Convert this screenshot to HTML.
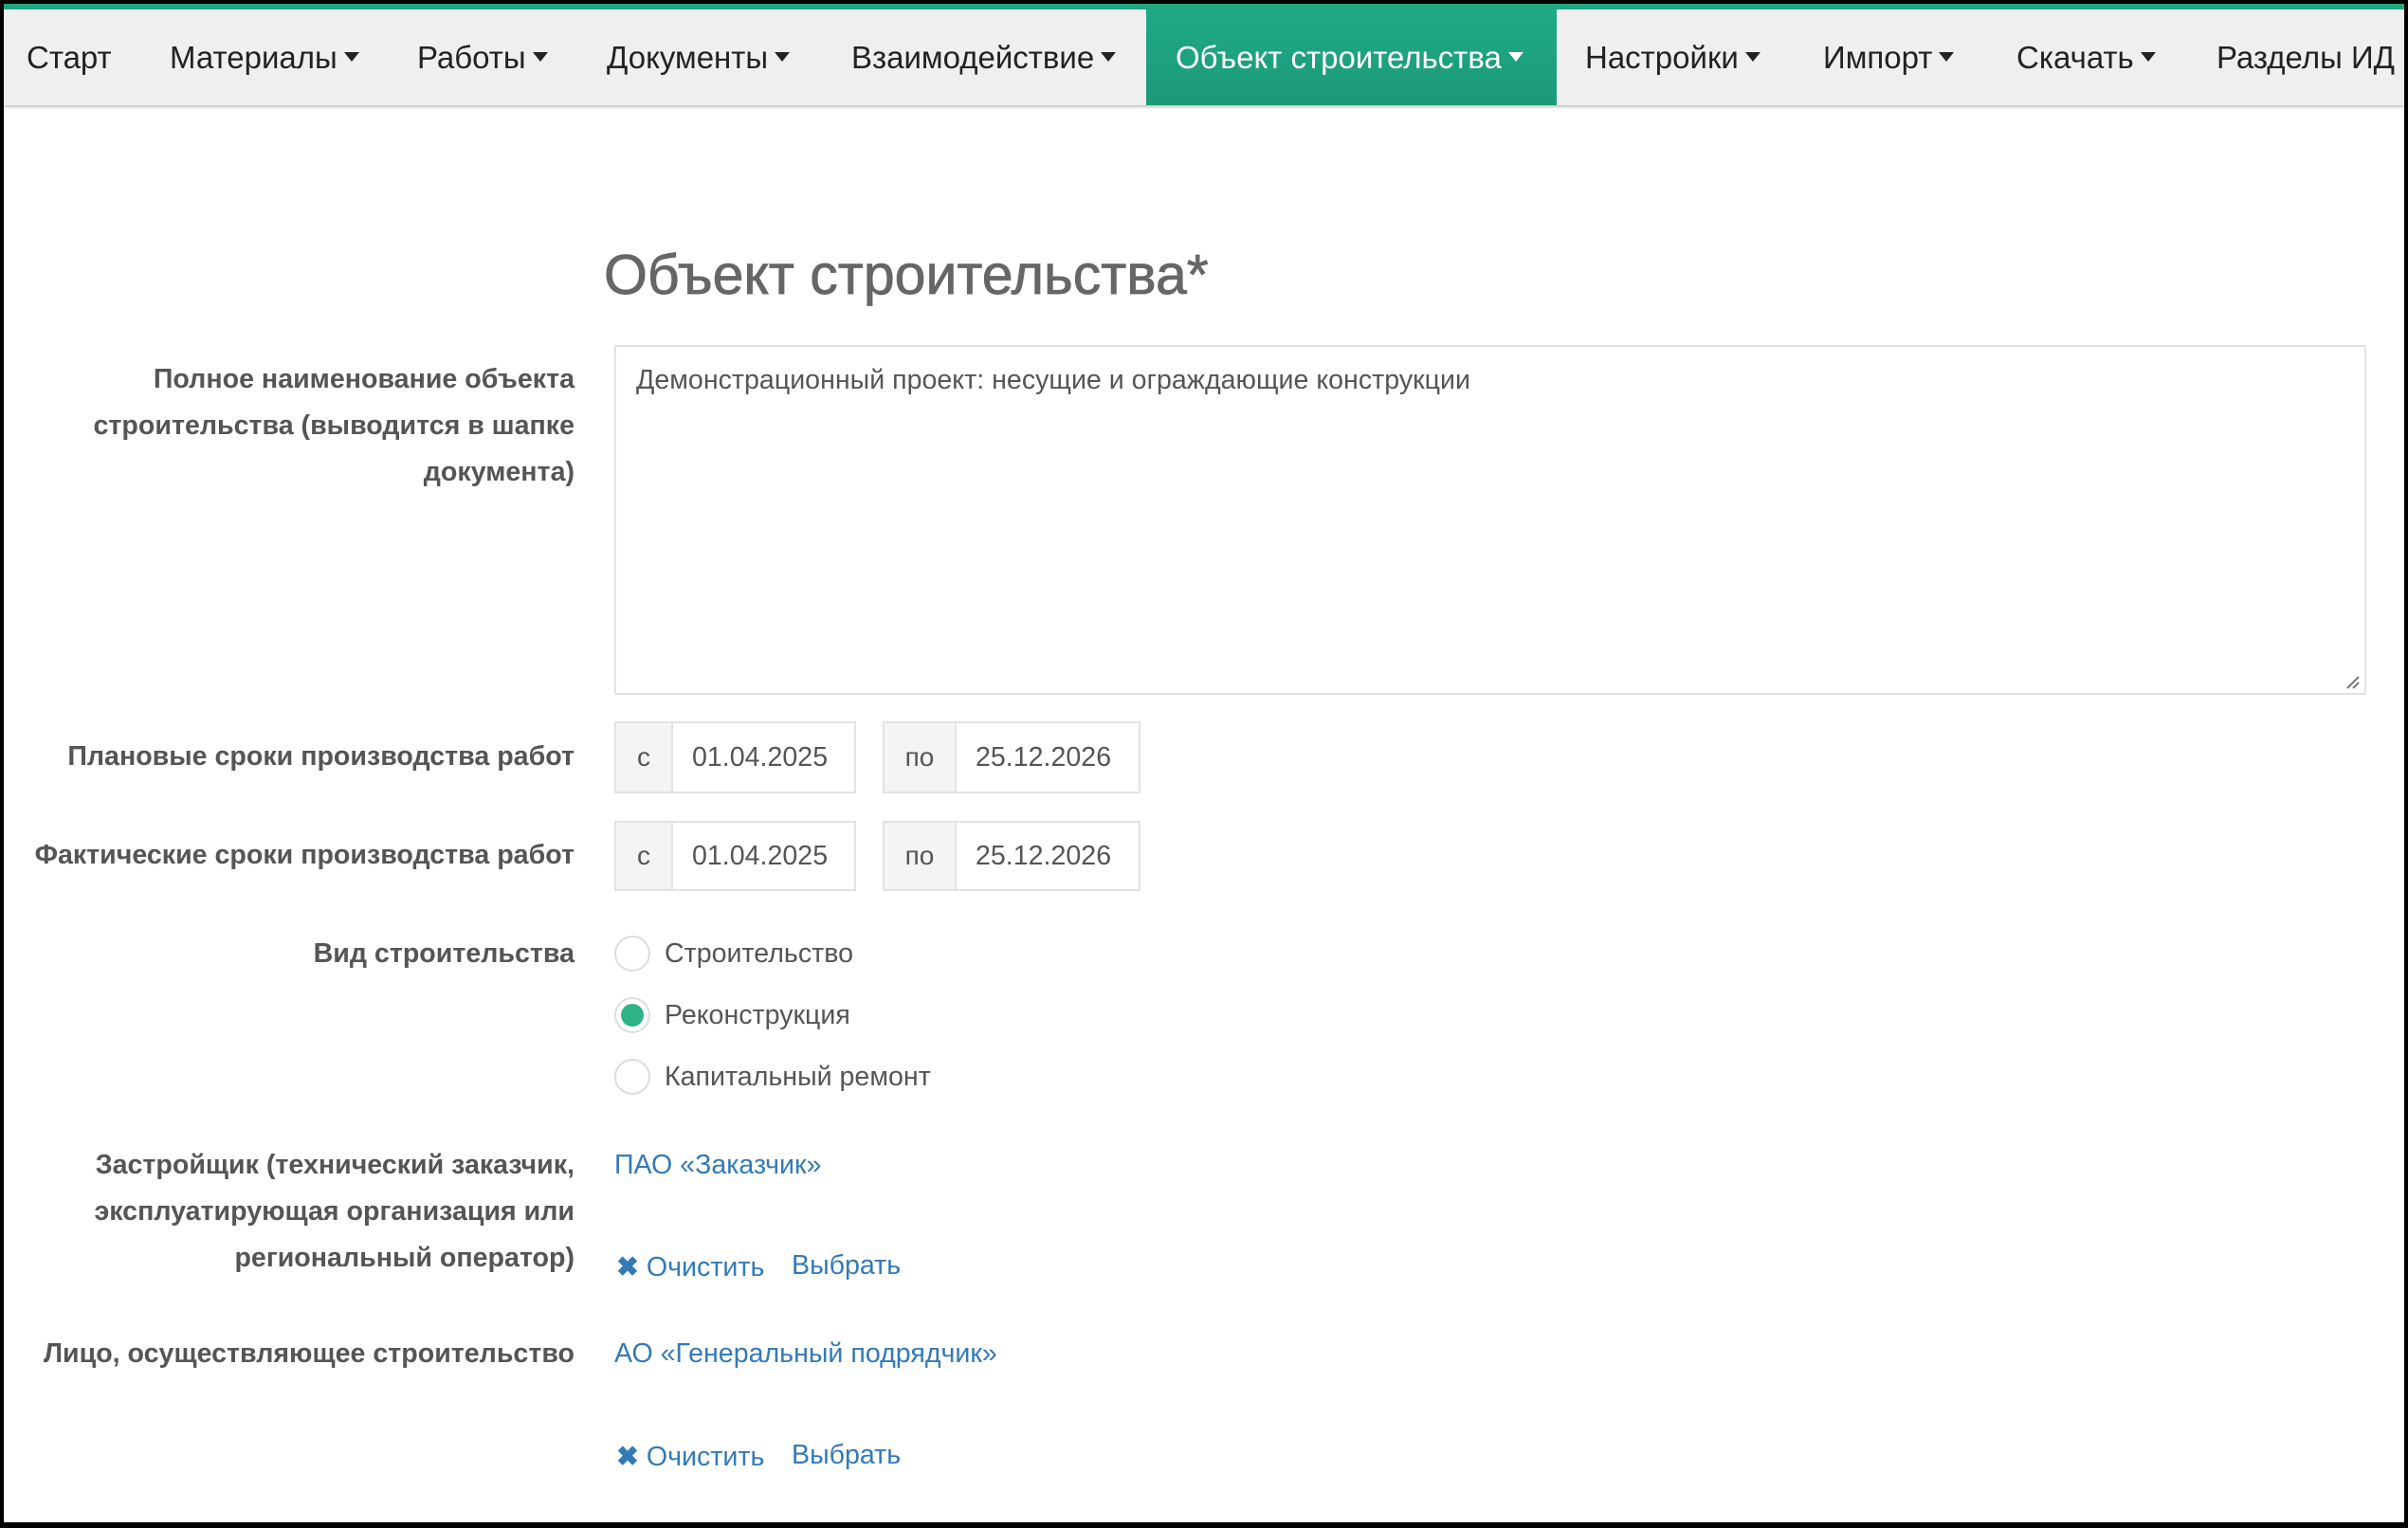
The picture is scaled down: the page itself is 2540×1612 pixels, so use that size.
<!DOCTYPE html>
<html><head><meta charset="utf-8"><style>
*{margin:0;padding:0;box-sizing:border-box}
body{width:2540px;height:1612px;position:relative;background:#fff;font-family:"Liberation Sans",sans-serif;overflow:hidden}
.frame{position:absolute;left:0;top:0;width:2540px;height:1612px;border:4px solid #000;border-bottom-width:6px}
.nav{position:absolute;left:4px;top:4px;width:2532px;height:107px;background:#efefef;border-top:6px solid #1fa67f;box-shadow:0 2px 3px rgba(0,0,0,.25)}
.nav span{position:absolute;top:0;height:101px;line-height:101px;font-size:33px;color:#222;white-space:nowrap}
.nav .act{background:linear-gradient(#1fa985,#1c9a78);color:#fff;padding:0 30px 0 31px;left:1205px;width:433px}
.c{display:inline-block;width:0;height:0;border-left:8px solid transparent;border-right:8px solid transparent;border-top:10px solid currentColor;vertical-align:middle;margin-left:7px;position:relative;top:-3px}
.t{position:absolute;white-space:nowrap}
.lbl{position:absolute;right:1934px;text-align:right;font-weight:bold;font-size:28.6px;color:#555;line-height:49px;white-space:nowrap}
.txt{font-size:28.6px;color:#555}
.box{position:absolute;border:2px solid #e3e3e3;background:#fff}
.add{position:absolute;background:#f4f4f4;border:2px solid #e3e3e3;font-size:28px;color:#555;text-align:center}
.rad{position:absolute;left:648px;width:38px;height:38px;border-radius:50%;border:2px solid #ddd;background:#fff}
.link{color:#337ab7;font-size:28.6px}
</style></head><body>
<div class="nav">
<span style="left:24px">Старт</span>
<span style="left:175px">Материалы<i class="c"></i></span>
<span style="left:436px">Работы<i class="c"></i></span>
<span style="left:636px">Документы<i class="c"></i></span>
<span style="left:894px">Взаимодействие<i class="c"></i></span>
<span class="act">Объект строительства<i class="c"></i></span>
<span style="left:1668px">Настройки<i class="c"></i></span>
<span style="left:1919px">Импорт<i class="c"></i></span>
<span style="left:2123px">Скачать<i class="c"></i></span>
<span style="left:2334px">Разделы ИД</span>
</div>

<div class="t" style="left:637px;top:256px;font-size:59px;color:#666;-webkit-text-stroke:0.8px #666">Объект строительства*</div>

<div class="lbl" style="top:376px">Полное наименование объекта<br>строительства (выводится в шапке<br>документа)</div>
<div class="box" style="left:648px;top:364px;width:1848px;height:369px"></div>
<div class="t txt" style="left:671px;top:385px">Демонстрационный проект: несущие и ограждающие конструкции</div>
<svg style="position:absolute;left:2474px;top:712px" width="16" height="16"><path d="M2 14L14 2M8 14L14 8" stroke="#777" stroke-width="2"/></svg>

<div class="lbl" style="top:774px">Плановые сроки производства работ</div>
<div class="add" style="left:648px;top:761px;width:62px;height:76px;line-height:72px">с</div>
<div class="box" style="left:708px;top:761px;width:195px;height:76px"></div>
<div class="t txt" style="left:730px;top:783px">01.04.2025</div>
<div class="add" style="left:931px;top:761px;width:78px;height:76px;line-height:72px">по</div>
<div class="box" style="left:1007px;top:761px;width:196px;height:76px"></div>
<div class="t txt" style="left:1029px;top:783px">25.12.2026</div>

<div class="lbl" style="top:878px">Фактические сроки производства работ</div>
<div class="add" style="left:648px;top:866px;width:62px;height:74px;line-height:70px">с</div>
<div class="box" style="left:708px;top:866px;width:195px;height:74px"></div>
<div class="t txt" style="left:730px;top:887px">01.04.2025</div>
<div class="add" style="left:931px;top:866px;width:78px;height:74px;line-height:70px">по</div>
<div class="box" style="left:1007px;top:866px;width:196px;height:74px"></div>
<div class="t txt" style="left:1029px;top:887px">25.12.2026</div>

<div class="lbl" style="top:982px">Вид строительства</div>
<div class="rad" style="top:987px"></div>
<div class="t txt" style="left:701px;top:990px">Строительство</div>
<div class="rad" style="top:1052px"><div style="position:absolute;left:5px;top:5px;width:24px;height:24px;border-radius:50%;background:#2fb387"></div></div>
<div class="t txt" style="left:701px;top:1055px">Реконструкция</div>
<div class="rad" style="top:1117px"></div>
<div class="t txt" style="left:701px;top:1120px">Капитальный ремонт</div>

<div class="lbl" style="top:1205px">Застройщик (технический заказчик,<br>эксплуатирующая организация или<br>региональный оператор)</div>
<div class="t link" style="left:648px;top:1213px">ПАО «Заказчик»</div>
<div class="t link" style="left:650px;top:1319px"><b>✖</b> Очистить</div>
<div class="t link" style="left:835px;top:1319px">Выбрать</div>

<div class="lbl" style="top:1404px">Лицо, осуществляющее строительство</div>
<div class="t link" style="left:648px;top:1412px">АО «Генеральный подрядчик»</div>
<div class="t link" style="left:650px;top:1519px"><b>✖</b> Очистить</div>
<div class="t link" style="left:835px;top:1519px">Выбрать</div>

<div class="frame"></div>
</body></html>
